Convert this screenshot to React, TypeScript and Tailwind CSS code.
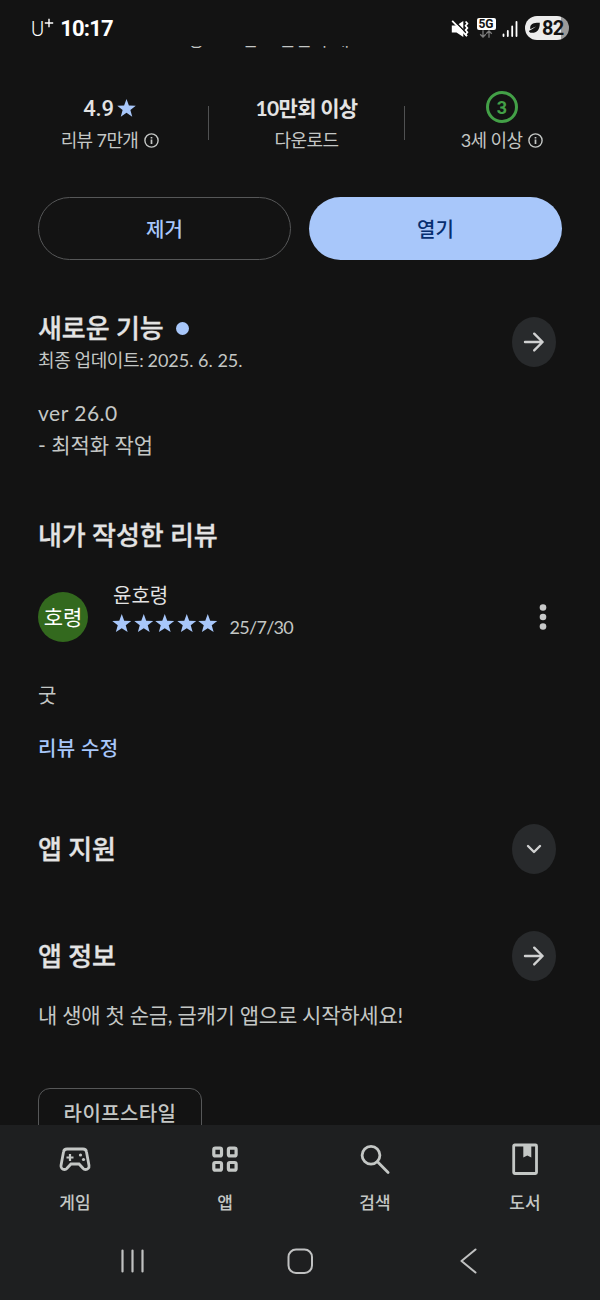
import React from 'react'
import { clsx } from 'clsx'

const STAR = 'M12 1.2l2.75 7.35 7.85.33-6.15 4.88 2.1 7.55L12 16.98l-6.55 4.33 2.1-7.55L1.4 8.88l7.85-.33z'

function Star({ className }: { className?: string }) {
    return (
        <svg viewBox="0 0 24 24" className={clsx('shrink-0 fill-[#a8c7fa]', className)}>
            <path d={STAR} />
        </svg>
    )
}

function Info() {
    return (
        <svg viewBox="0 0 15 15" className="w-[15px] h-[15px] shrink-0" fill="none" stroke="#c4c7c5" strokeWidth="1.4">
            <circle cx="7.5" cy="7.5" r="6.6" />
            <path d="M7.5 6.6v4.3M7.5 3.9v1.5" strokeWidth="1.7" />
        </svg>
    )
}

function RoundButton({ icon }: { icon: 'arrow' | 'chevron' }) {
    return (
        <button className="w-11 h-[50px] shrink-0 rounded-[50%] bg-[#282a2c] flex items-center justify-center">
            <svg viewBox="0 0 24 24" className="w-6 h-6" fill="none" stroke="#d0d1d1" strokeWidth="2.4" strokeLinecap="round" strokeLinejoin="round">
                {icon === 'arrow' ? <path d="M3 12h17.5M12.2 3.7L20.6 12l-8.4 8.4" /> : <path d="M6 9l6 6 6-6" />}
            </svg>
        </button>
    )
}

function StatusBar() {
    return (
        <header className="relative z-10 h-[46px] shrink-0 bg-[#131313] flex items-start justify-between px-[31px] text-white">
            <div className="flex items-start pt-[15px] font-['Roboto',sans-serif]">
                <span className="text-[20px] leading-7 font-light">U</span>
                <svg viewBox="0 0 10 10" className="w-[10px] h-[10px] mt-[3px]" stroke="white" strokeWidth="1.4">
                    <path d="M5 .8v8.4M.8 5h8.4" />
                </svg>
                <span className="ml-[6px] text-[22px] leading-7 font-bold tracking-[-0.8px]">10:17</span>
            </div>
            <div className="flex items-start">
                {/* Muted / vibrate */}
                <svg viewBox="0 0 18 18" className="w-[18px] h-[18px] mt-[20px]" fill="white">
                    <path d="M.8 5.5h4.7l6.8-4.5v16L5.5 12.5H.8z" />
                    <path d="M2.6.2l14 14" stroke="#131313" strokeWidth="1.6" />
                    <path d="M1.2.8l14.6 15" stroke="white" strokeWidth="1.7" />
                    <path d="M14.6 1.5l1.8 2-1.8 2.2 1.8 2.2-1.8 2.2 1.8 2.2-1.8 2.2 1.4 1.6" stroke="white" strokeWidth="1.7" fill="none" />
                </svg>
                <div className="ml-[8px] mt-[18px] w-[18px] flex flex-col items-center">
                    <span className="w-[19px] h-3 rounded-[2px] bg-white text-[#131313] text-[12px] leading-3 font-bold text-center font-['Roboto',sans-serif]">5G</span>
                    <svg viewBox="0 0 14 8" className="w-[14px] h-2" fill="none" stroke="#7c7c7c" strokeWidth="1.3">
                        <path d="M4 .3v6.6M1.2 4.3L4 7l2.8-2.7M10 7.7V1M7.200 3.700L10 1l2.800 2.700" />
                    </svg>
                </div>
                <svg viewBox="0 0 16 17" className="w-4 h-[17px] mt-[20px] ml-[7px]" stroke="white" strokeWidth="1.8" strokeLinecap="round">
                    <path d="M1.5 16v-1.5M5.8 16v-5M10.2 16V6.5M14.5 16V1.8" />
                </svg>
                <div className="ml-[7px] mt-4 w-[44px] h-6 rounded-full overflow-hidden bg-[linear-gradient(90deg,#ececec_82%,#9a9a9a_82%)] flex items-center text-[#131313]">
                    <svg viewBox="0 0 13 12" className="w-[13px] h-3 ml-[3px] shrink-0">
                        <path d="M11.8.8C6 .6 2.4 2 2.2 5.4c0 .8 0 1.4.2 1.9 1.8-1 3.6-2 5.8-2.7-2.6 1.6-5 3.3-7.4 4.4.6 1 1.2 1.8 2.400 1.800 5.300.4 8.800-2.600 8.600-10z" fill="#131313" />
                    </svg>
                    <span className="ml-px text-[20px] leading-6 font-bold tracking-[-0.8px] font-['Roboto',sans-serif]">82</span>
                </div>
            </div>
        </header>
    )
}

function Stats() {
    return (
        <section className="mt-[39px] pl-3 h-[66px] flex items-center">
            <div className="w-[196px] flex flex-col items-center">
                <div className="h-[33px] pt-px flex items-center gap-[2px] text-[#e3e3e3]">
                    <span className="text-[22px] font-medium tracking-[-0.2px] font-['Roboto',sans-serif]">4.9</span>
                    <Star className="w-[21px] h-[21px] mt-px" />
                </div>
                <div className="h-[31px] pt-px flex items-center gap-[6px] text-[18px] tracking-[-0.6px]">
                    리뷰 7만개 <Info />
                </div>
            </div>
            <div className="w-px h-[34px] bg-[#505152]" />
            <div className="w-[195px] flex flex-col items-center">
                <div className="h-[33px] leading-[33px] text-[21px] font-bold tracking-[-0.7px] text-[#e3e3e3]">10만회 이상</div>
                <div className="h-[31px] leading-[32px] text-[18px] tracking-[-0.6px]">다운로드</div>
            </div>
            <div className="w-px h-[34px] bg-[#505152]" />
            <div className="w-[194px] flex flex-col items-center">
                <div className="h-8 w-8 mb-px rounded-full border-[3px] border-[#43a047] text-[#43a047] font-bold text-[18px] flex items-center justify-center font-['Roboto',sans-serif]">3</div>
                <div className="h-[31px] pt-px flex items-center gap-[6px] text-[18px] tracking-[-0.6px]">
                    3세 이상 <Info />
                </div>
            </div>
        </section>
    )
}

function Heading({ children }: { children: React.ReactNode }) {
    return (
        <h2 className="h-8 leading-8 text-[26px] font-medium tracking-[-0.1px] text-[#e3e3e3] [-webkit-text-stroke:0.3px_#e3e3e3]">
            {children}
        </h2>
    )
}

const tabs = [
    {
        label: '게임',
        icon: (
            <g>
                <path d="M8 6h16c2 0 3.2 1 3.5 3l2.5 13.5c.4 2.4-1.4 4-3.5 4-1 0-1.8-.4-2.5-1.2L20 21h-8l-4 4.3c-.7.8-1.5 1.2-2.5 1.2-2.1 0-3.9-1.6-3.5-4L4.5 9C4.8 7 6 6 8 6z" />
                <path d="M7.5 14.5h7M11 11v7" strokeWidth="2.2" />
                <circle cx="21.5" cy="12" r="1.6" fill="#c4c7c5" stroke="none" />
                <circle cx="24.5" cy="16.5" r="1.6" fill="#c4c7c5" stroke="none" />
            </g>
        ),
    },
    {
        label: '앱',
        icon: (
            <g strokeWidth="3.2">
                <rect x="4.8" y="5.2" width="7.7" height="7.7" rx="1.5" />
                <rect x="19.4" y="5.2" width="7.7" height="7.7" rx="1.5" />
                <rect x="4.8" y="19.5" width="7.7" height="7.7" rx="1.5" />
                <rect x="19.4" y="19.5" width="7.7" height="7.7" rx="1.5" />
            </g>
        ),
    },
    {
        label: '검색',
        icon: (
            <g strokeLinecap="round">
                <circle cx="12" cy="12.3" r="8.9" />
                <path d="M18.5 18.8l10.6 10.6" />
            </g>
        ),
    },
    {
        label: '도서',
        icon: (
            <g>
                <rect x="4.7" y="2" width="22.8" height="28.5" rx="1" />
                <path d="M14.3 2h8v12.5l-4-2-4 2z" fill="#c4c7c5" stroke="none" />
            </g>
        ),
    },
]

function BottomBar() {
    return (
        <footer className="relative z-10 h-[175px] shrink-0 bg-[#1e1f20]">
            <nav className="grid grid-cols-4 pt-[18px]">
                {tabs.map((tab) => (
                    <div key={tab.label} className="flex flex-col items-center">
                        <svg viewBox="0 0 32 32" className="w-8 h-8" fill="none" stroke="#c4c7c5" strokeWidth="2.8">
                            {tab.icon}
                        </svg>
                        <span className="mt-4 h-6 leading-6 text-[17px] font-medium">{tab.label}</span>
                    </div>
                ))}
            </nav>
            {/* System navigation */}
            <div className="mt-8 flex justify-between px-[118px]">
                <svg viewBox="0 0 28 28" className="w-7 h-7" stroke="#c0c1c1" strokeWidth="2.2" strokeLinecap="round">
                    <path d="M4.5 3.5v21M14.5 3.5v21M24.5 3.5v21" />
                </svg>
                <svg viewBox="0 0 28 28" className="w-7 h-7" fill="none" stroke="#c0c1c1" strokeWidth="2">
                    <rect x="2.5" y="2.5" width="23.5" height="23.5" rx="7.5" />
                </svg>
                <svg viewBox="0 0 28 28" className="w-7 h-7" fill="none" stroke="#c0c1c1" strokeWidth="2" strokeLinecap="round" strokeLinejoin="round">
                    <path d="M21.5 2.5L7.5 14l14 11.5" />
                </svg>
            </div>
        </footer>
    )
}

export default function App() {
    return (
        <div className="w-[600px] h-[1300px] overflow-hidden flex flex-col bg-[#131313] text-[#c4c7c5] font-['Lato','Noto_Sans_CJK_KR',sans-serif]">
            <StatusBar />
            <main className="h-[1079px] shrink-0 overflow-hidden">
                {/* Scrolled under the status bar */}
                <div className="-mt-[19px] h-6 leading-6 pl-[188px] text-[18px] whitespace-nowrap">광고 포함 • 인앱 구매</div>
                <Stats />

                <div className="mt-[41px] px-[38px]">
                    <div className="grid grid-cols-2 gap-[18px]">
                        <button className="h-[63px] rounded-full border border-[#565758] text-[20px] font-medium text-[#a8c7fa]">제거</button>
                        <button className="h-[63px] rounded-full bg-[#a8c7fa] text-[20px] font-medium text-[#062e6f]">열기</button>
                    </div>

                    {/* What's new */}
                    <section className="mt-[52px]">
                        <div className="flex justify-between pr-[6px]">
                            <div>
                                <div className="flex items-center gap-[12px]">
                                    <Heading>새로운 기능</Heading>
                                    <span className="w-[13px] h-[13px] mt-px rounded-full bg-[#a8c7fa]" />
                                </div>
                                <p className="h-8 leading-8 text-[18px] tracking-[-0.4px]">
                                    최종 업데이트: <span className="tracking-normal">2025. 6. 25.</span>
                                </p>
                            </div>
                            <div className="pt-[5px]">
                                <RoundButton icon="arrow" />
                            </div>
                        </div>
                        <p className="mt-[21px] leading-8 text-[21px]">
                            <span className="tracking-[0.5px]">ver 26.0</span>
                            <br />- 최적화 작업
                        </p>
                    </section>

                    {/* My review */}
                    <section className="mt-[58px]">
                        <Heading>내가 작성한 리뷰</Heading>
                        <div className="mt-[28px] h-[76px] flex items-center">
                            <div className="w-[50px] h-[50px] rounded-full bg-[#33691e] text-white text-[21px] flex items-center justify-center">호령</div>
                            <div className="ml-[23px] -mt-4">
                                <div className="h-[30px] pl-[2px] leading-[30px] text-[20px] text-[#e3e3e3]">윤호령</div>
                                <div className="h-[28px] flex items-center">
                                    <div className="flex">
                                        {[1, 2, 3, 4, 5].map((n) => (
                                            <Star key={n} className="w-[21.5px] h-[21.5px]" />
                                        ))}
                                    </div>
                                    <span className="ml-[11px] mt-[6px] text-[18px] tracking-[-0.7px]">25/7/30</span>
                                </div>
                            </div>
                            <svg viewBox="0 0 8 28" className="ml-auto mr-[15px] w-2 h-7" fill="#c8c9c9">
                                <circle cx="4" cy="4.5" r="3.3" />
                                <circle cx="4" cy="14" r="3.3" />
                                <circle cx="4" cy="23.5" r="3.3" />
                            </svg>
                        </div>
                        <p className="mt-[24px] h-8 leading-8 text-[20px]">굿</p>
                        <p className="mt-[21px] h-8 leading-8 text-[20px] font-medium tracking-[0.4px] text-[#a8c7fa]">리뷰 수정</p>
                    </section>

                    <section className="mt-[60px] h-[50px] pr-[6px] flex items-center justify-between">
                        <Heading>앱 지원</Heading>
                        <RoundButton icon="chevron" />
                    </section>

                    <section className="mt-[57px]">
                        <div className="h-[50px] pr-[6px] flex items-center justify-between">
                            <Heading>앱 정보</Heading>
                            <RoundButton icon="arrow" />
                        </div>
                        <p className="mt-[18px] h-8 leading-8 text-[21px] tracking-[-0.25px] whitespace-nowrap">내 생애 첫 순금, 금캐기 앱으로 시작하세요!</p>
                        <div className="mt-[57px] w-[164px] h-[50px] rounded-xl border border-[#565758] text-[20px] font-medium tracking-[0.4px] flex items-center justify-center">
                            라이프스타일
                        </div>
                    </section>
                </div>
            </main>
            <BottomBar />
        </div>
    )
}
